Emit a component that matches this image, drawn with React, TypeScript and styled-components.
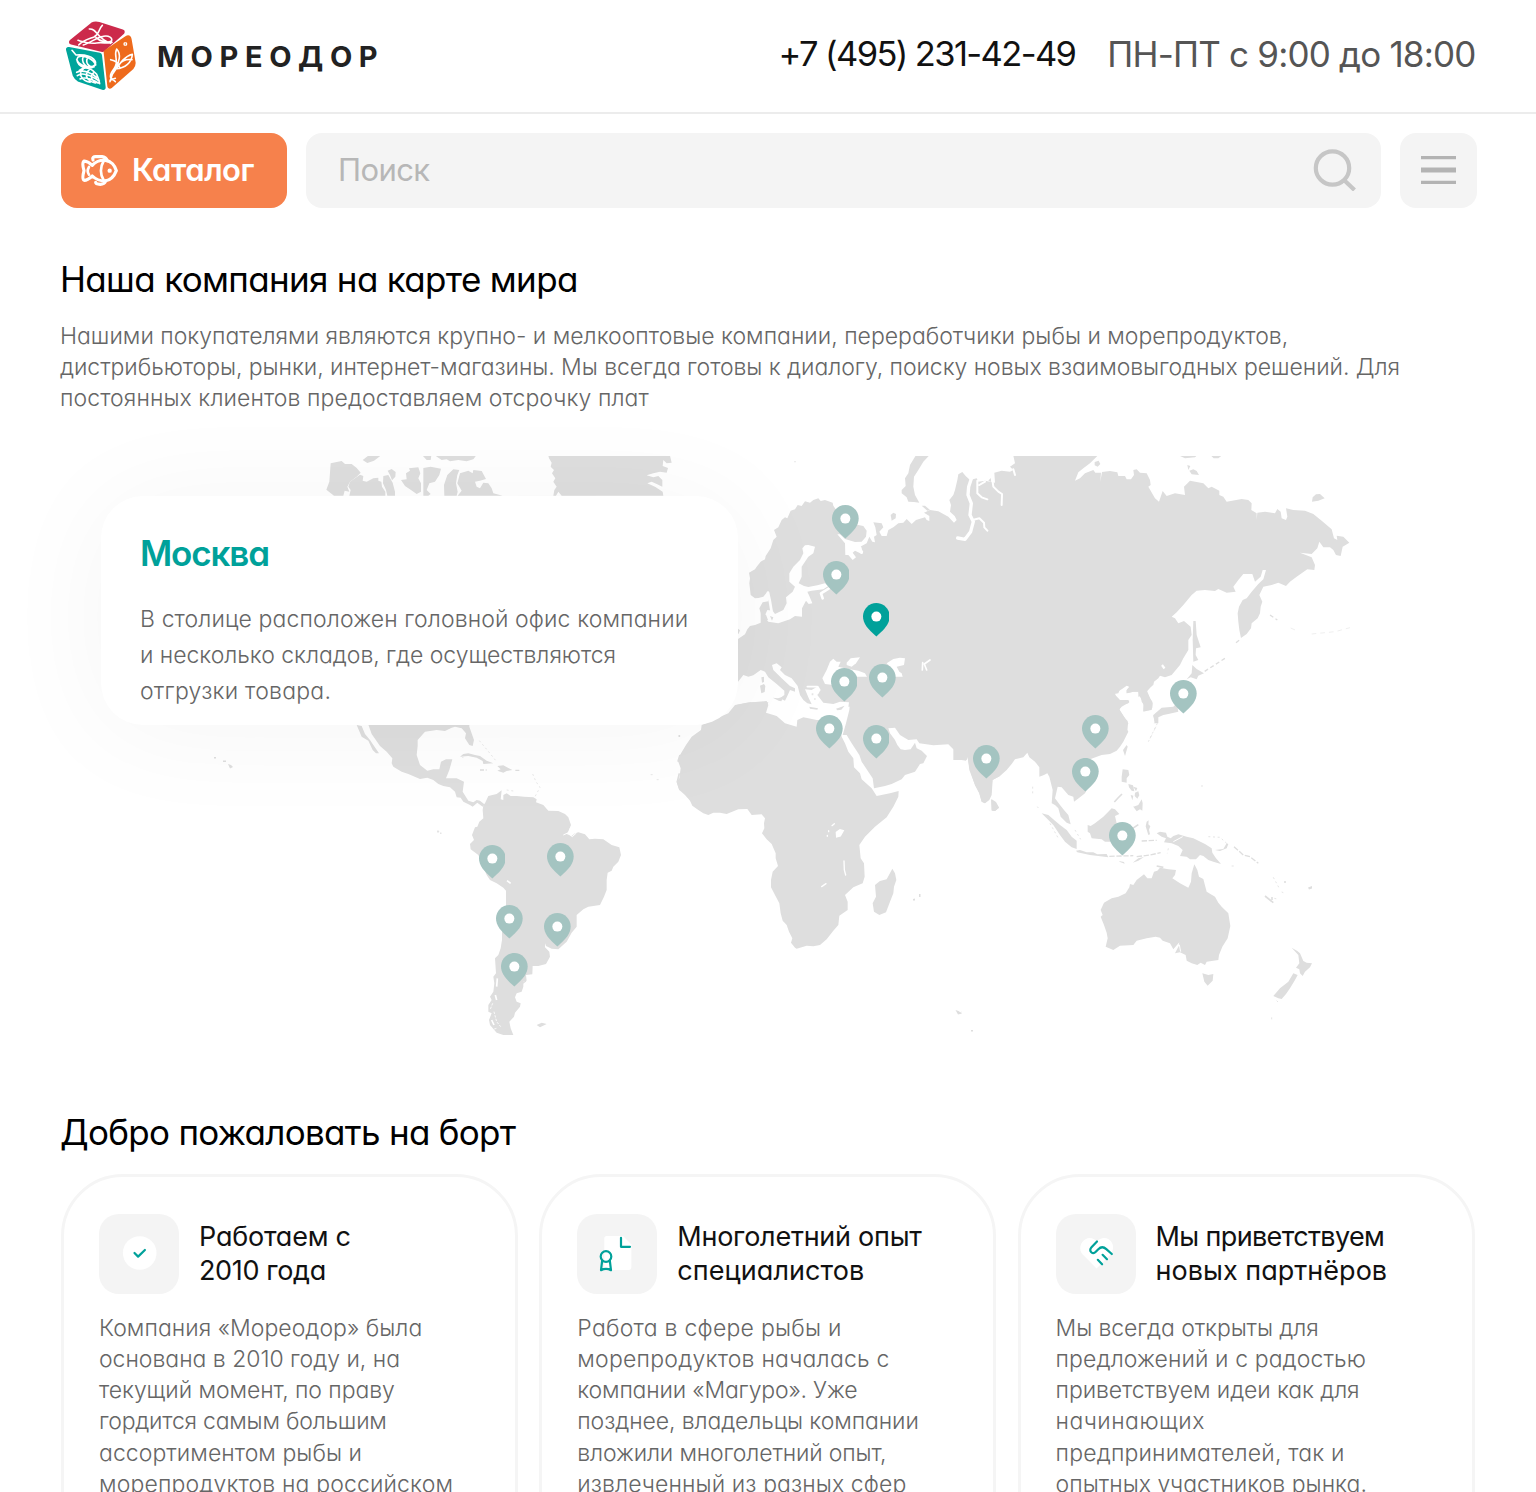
import React from "react";
import styled, { createGlobalStyle } from "styled-components";

const GlobalStyle = createGlobalStyle`
  * { box-sizing: border-box; }
  body {
    margin: 0;
    background: #fff;
    font-family: Inter, "Open Sans", sans-serif;
    font-feature-settings: "cv11";
  }
  h1, h2, h3, p { margin: 0; font-weight: 400; }
  svg { display: block; }
`;

const Page = styled.div`
  width: 1536px;
  height: 1492px;
  overflow: hidden;
  background: #fff;
  color: #111;
`;

/* One typeset line; $track tunes the letter spacing in px. */
const Line = styled.span<{ $track?: number }>`
  display: block;
  white-space: nowrap;
  letter-spacing: ${(p) => p.$track ?? 0}px;
`;

type Row = [text: string, track: number];
const Lines = ({ rows }: { rows: Row[] }) => (
  <>
    {rows.map(([text, track]) => (
      <Line key={text} $track={track}>
        {text}
      </Line>
    ))}
  </>
);

/* ---------- header ---------- */

const Header = styled.header`
  display: flex;
  align-items: center;
  justify-content: space-between;
  height: 114px;
  padding: 0 60.500px 0 65px;
  border-bottom: 2px solid #ececec;
`;

const Brand = styled.div`
  display: flex;
  align-items: center;
  gap: 20px;
`;

const BrandName = styled.span`
  padding-top: 2px;
  font-size: 29px;
  line-height: 36px;
  font-weight: 700;
  letter-spacing: 6.6px;
  color: #222;
`;

const Contacts = styled.div`
  display: flex;
  gap: 32px;
  padding-bottom: 5px;
  font-size: 35px;
  line-height: 44px;
`;

const Phone = styled.span`
  font-size: 34.5px;
  letter-spacing: -1.62px;
  white-space: nowrap;
`;

const Hours = styled.span`
  letter-spacing: -0.81px;
  white-space: nowrap;
  color: #555;
`;

/* ---------- tool bar ---------- */

const Bar = styled.div`
  display: flex;
  gap: 19.5px;
  padding: 19px 59px 0 61px;
`;

const CatalogButton = styled.button`
  display: flex;
  align-items: center;
  gap: 13px;
  width: 225.5px;
  height: 75px;
  padding: 0 0 1px 19px;
  border: 0;
  border-radius: 16px;
  background: #f6814c;
  color: #fff;
  font: 600 31px/38px Inter, sans-serif;
  font-feature-settings: "cv11";
  letter-spacing: -0.45px;
`;

const Search = styled.div`
  display: flex;
  flex: 1;
  align-items: center;
  justify-content: space-between;
  height: 75px;
  padding: 0 24px 2px 32px;
  border-radius: 16px;
  background: #f4f4f4;
  color: #b7b7b7;
  font-size: 31px;
  line-height: 38px;
  letter-spacing: -0.6px;
`;

const MenuButton = styled.button`
  display: flex;
  align-items: center;
  justify-content: center;
  width: 77px;
  height: 75px;
  padding: 0 0 1px;
  border: 0;
  border-radius: 16px;
  background: #f4f4f4;
`;

/* ---------- intro ---------- */

const Section = styled.section<{ $top: number }>`
  padding: ${(p) => p.$top}px 60px 0;
`;

const Title = styled.h2`
  color: #000;
  font-size: 35px;
  line-height: 44px;
`;

const Intro = styled.p`
  padding-top: 20px;
  color: #666;
  font-size: 23px;
  font-weight: 300;
  line-height: 31.2px;
`;

/* ---------- map ---------- */

const MapArea = styled.div`
  position: relative;
  height: 579px;
  margin-top: 41.4px;
`;

const Popup = styled.article`
  position: absolute;
  left: 101px;
  top: 40px;
  width: 637px;
  height: 229px;
  padding: 35px 39px;
  border-radius: 42px;
  background: #fff;
  box-shadow: 0 6px 116px rgba(0, 0, 0, 0.045);
`;

const City = styled.h3`
  color: #00a19a;
  font-size: 35px;
  font-weight: 600;
  line-height: 44px;
`;

const CityText = styled.p`
  padding-top: 26px;
  color: #666;
  font-size: 23px;
  font-weight: 300;
  line-height: 36px;
`;

const PinSvg = styled.svg<{ $x: number; $y: number }>`
  position: absolute;
  left: ${(p) => p.$x - 13.3}px;
  top: ${(p) => p.$y - 469.4}px;
`;

const pins: [number, number][] = [
  [845.5, 518.7], [836, 574.7], [844, 681.7], [882.3, 677], [829.6, 728.3],
  [876, 738], [986.4, 758.5], [1095.3, 728], [1183.3, 693], [1085.5, 771.5],
  [1122.4, 835.3], [492, 858], [560.7, 856], [509.5, 918.7], [557.5, 926.7],
  [514.4, 966.7],
];

const Pin = ({ x, y, active }: { x: number; y: number; active?: boolean }) => (
  <PinSvg $x={x} $y={y} width="26.7" height="34" viewBox="0 0 26.7 34">
    <path
      fill={active ? "#00a19a" : "#a4c4c1"}
      d="M13.35 0C20.7 0 26.7 6 26.7 13.3c0 7.2-4.9 13.2-13.35 20.2C4.9 26.5 0 20.5 0 13.3 0 6 6 0 13.35 0Z"
    />
    <circle cx="13.35" cy="13.6" r="5" fill="#fff" />
  </PinSvg>
);

const northAmerica = [
  "M62,70L95,63 105,72 125,72 140,84 152,98 140,110 120,125 112,140 118,155 104,152 100,167H72L49,149 58,125Z",
  "M118,167L122,150 115,140 120,125 150,104 160,108 158,122 170,125 190,115 205,113 205,122 214,125 216,140 226,155V167Z",
  "M220,108L235,105 248,128 255,155V167H232L228,150 219,130Z",
  "M233,92L245,87 257,96 256,110 246,121 240,105Z",
  "M158,60L175,47H212L192,62 172,69Z",
  "M288,100L300,92 297,85 325,82 331,100 325,115 333,130 333,155 320,162 303,150 285,138 273,120 290,118Z",
  "M340,84L362,80 393,86 388,105 375,125 358,130 350,150 362,162 355,167H340Z",
  "M338,47H364L362,60 350,60ZM376,47H498L490,58 470,64 445,60 420,64 410,58 395,60Z",
  "M403,167L402,135 412,105 430,88 448,90 442,105 438,130 443,155 440,167Z",
  "M443,167L455,152 442,130 450,100 475,92 488,100 490,90 515,93 528,117 510,122 495,125 500,140 510,145 520,128 535,130 545,145 550,160 578,167Z",
  "M715,47H1080L1085,68 1070,70 1060,60 1058,78 1074,84 1070,98 1050,95 1030,100 1010,106 1030,112 1045,108 1057,120V140L1040,132 1025,125 1012,130 1035,140 1058,155 1060,167H755L745,155 738,167H730L733,150 740,140 730,125 736,115 726,100 732,90 722,80 725,68 717,55Z",
];

const europe = [
  "M557,47H597L580,65 565,90 552,110 550,140 555,165 568,188 552,186 535,185 530,172 515,160 515,150 527,138 525,115 535,100 540,75Z",
  "M-30,600L24,597 45,583 52,568 60,558 75,555 92,548 92,520 88,505 98,487 115,484 118,470 112,455 100,470 85,474 75,475 62,465 58,430 60,415 57,398 75,388 80,380 92,365 105,358 107,348 122,325 130,300 140,290 132,270 145,262 155,240 165,232 172,235 182,212 195,208 203,195 215,198 225,184 240,188 250,180 265,175 272,183 285,180 308,188 310,197 322,215 345,240 385,255 400,258 410,272 408,290 395,305 375,306 345,297 330,283 322,283 345,310 346,345 355,345 368,360 378,352 368,338 375,332 395,342 400,335 388,322 410,310 418,290 427,305 435,307 432,290 440,285 436,262 430,247 455,250 460,262 448,275 455,288 470,288 475,270 490,262 505,250 520,248 530,237 545,252 558,240 585,232 590,240 598,243V228L582,218 600,210 625,214 640,222 655,230 672,248 680,240 674,228 660,215 663,195 658,180 670,165 675,150 682,120 685,103 697,96 707,108 720,120 740,115 745,125 765,122 795,128 793,98 815,92 840,95 850,90 840,80 855,70 850,47H980V800H-30Z",
  "M482,225L490,218 498,222 497,235 485,242ZM575,197L585,197 600,210 592,212ZM775,122l7,-8 2,12Z",
];
const europeSeas = [
  "M235,315L255,320 250,340 235,350 225,365 215,380V410L206,430 222,438 235,441 262,436 285,430 295,438 280,448 245,452 232,455 238,468 247,490 236,492 228,482 216,505V530L195,528 180,538 145,550 115,545 103,530 112,510 128,512 135,522 160,510 170,490 168,472 188,455 195,440 178,425V400L190,380 210,360 220,340 217,325 225,316Z",
  "M10,740L22,728 40,705 55,710 70,706 92,690 105,695 115,712 140,732 163,752V765L150,775 165,782 172,768 180,750 195,755 195,745 180,738 155,715 130,690 126,675 140,670 155,682 150,690 165,705 185,715 203,738 210,765 220,780 232,790 245,793 235,772 225,748 245,750 265,738 272,750 262,765 280,788 310,792 330,785 357,787 352,825 343,850 325,855 310,845 265,853 235,843 208,833 200,858 185,855 165,850 140,826 120,822 107,815 115,787 60,787 20,795 -5,815 -30,815V735Z",
  "M285,732L277,715 290,690 300,665 310,656 320,665 332,665 325,680 345,685 360,688 385,692 405,700 415,718 405,735 385,735 360,722 330,725 310,735Z",
  "M350,668L362,655 390,652 378,670 365,680 350,675Z",
  "M470,670L490,657 510,653 525,655 522,675 500,680 508,695 515,700 520,718 540,735 528,745 533,765V785L510,788 488,775 485,765 495,745 478,710 490,690Z",
];

const farEast = [
  "M-20,47H203L180,70 160,85 145,97 135,122 150,115 165,100 190,90 196,98 213,98 211,125 216,96 240,93 262,97 265,108 285,108 290,118 303,118 312,105 310,90 320,88 330,98 350,100 360,120 362,135 355,140 375,175 387,185 398,153 410,168 435,160 465,165 462,140 480,122 520,130 535,145 545,140 568,152 568,165 580,170 590,185 635,177 655,180 665,190 664,210 680,220V240L682,218 705,215 735,220 742,207 752,215 755,235 768,240 772,230 768,205 790,210 825,212 850,222 875,242 905,268 912,295 922,300 920,287 940,290 958,308 938,320 932,348 918,345 910,330 900,322 880,322 868,305 862,325 845,342 810,338 845,352 855,375 853,390 832,388 800,410 780,425 768,438 745,428 725,435 700,440 688,465 697,485 692,500 690,520 683,535 665,550 663,565 650,582 633,594 628,570 625,545 623,520 627,500 638,480 650,475 665,455 685,432 700,418 708,390 698,390 692,410 675,425 667,402 640,402 625,420 610,440 617,455 590,458 565,447 555,453 525,450 500,452 485,465 460,495 440,517 425,530 435,535 445,550 462,543 482,560 485,585 475,600 475,630 460,655 450,675 425,705 405,712 390,707 385,715 372,725 370,735 350,750 360,775 367,785V803L360,810 340,815 342,795 335,785 333,768 325,770 325,755 310,755 290,760 290,750 299,740 290,737 275,748 255,760 257,768 268,780 295,780 298,787 275,800 268,808 285,835 293,843V865L287,885 275,900H-20Z",
  "M490,543H497L500,585 512,622 498,625 497,645 505,660 490,665 488,600Z",
  "M487,675L500,687 522,700 505,707 500,718 482,712 470,718 485,700Z",
  "M370,825L395,803 430,800 440,790 445,815 415,822 400,825 385,832 385,850 375,850Z",
  "M478,92L490,88 500,93 507,105 485,103ZM846,185L848,172 858,163 870,162 884,175 865,182ZM448,47h52l-5,5-30,3zM543,47h32l-10,8h-14zM472,75l9,3-6,12zM194,66l12-4 5,10-8,8-9-4z",
];

const africa = [
  "M125,135L123,150 95,170 78,195 60,225 53,240 62,265 58,295 50,305 58,330 75,345 90,362 97,377 115,390 130,400 145,405 160,398 180,398 200,402 235,388 262,387 268,395 275,405 305,403 315,415 312,430 313,445 306,460 320,478 335,492 347,520 347,535 354,558 338,575 333,600V622L345,645 358,670 362,700 368,722 380,735 387,755 397,775 393,788 405,803 410,806 440,797 460,799 480,795 500,778 520,752 535,735 538,707 563,690V665L555,645 580,622 608,610 614,590 612,550 602,535 598,495 615,470 645,440 680,412 700,380 715,350 716,333 690,340 650,348 635,325 605,298 600,280 582,262 580,235 565,215 555,190 545,170 540,120H470L445,115 430,112 412,120 410,140 375,130 350,108 318,98 325,75 320,63 260,68 225,75 205,100Z",
  "M548,165L560,165 575,190 598,225 605,245 625,275 638,295 642,325 675,318 695,312 725,298 735,285 765,275 780,252 790,250 801,228 785,212 770,205 765,188 752,208 735,210 722,208 712,195 705,180 690,160 685,145 705,143 720,165 745,180 770,178 778,190 820,196 865,193 880,208 892,215 890,225 905,240 918,242 922,230 930,270 945,315 958,340 965,365 975,370 993,345 997,300 1020,288V-10H560L570,68 568,90 558,130Z",
  "M697,566L705,580 709,600 702,620 700,640 690,665 678,697 658,705 642,695 638,670 648,650 645,615 660,603 680,598Z",
  "M993,358L1008,368 1017,383 1005,393 995,392Z",
];

const asia = [
  "M-20,-10V240L20,240 23,230 28,270 45,315 58,340 65,365 75,370 88,360 95,345 98,300 120,288 140,270 155,252 165,238 190,232 202,218 208,232 225,245 238,262 238,290 252,285 262,280 268,290 278,330 275,370 285,375 295,385 302,410 320,428 332,433 325,405 312,390 300,375 285,355 293,320 305,322 325,345 340,350 342,365 360,352 375,340 390,310 375,275 368,250 390,238 425,225 450,222 470,212 480,200 490,185 500,165 505,155 500,145 505,130 492,110 478,90 485,75 505,70 508,62 480,60 463,42 475,40 480,28 500,15 508,20 500,30V40L520,35H535L540,50 550,70V93L575,90 578,70 560,35 575,18 583,0V-10Z",
  "M245,400L265,405 285,422 300,435 320,450 335,470 350,482V507L335,502 315,485 300,465 280,435 260,415Z",
  "M348,512L360,510 380,517 400,517 412,523 440,522 445,532 415,528 390,525 352,517Z",
  "M383,435L392,438 405,430 430,410 442,398 455,385 465,388 478,402 465,408 470,430 480,440 460,485 435,485 425,478 395,475 390,460 383,455Z",
  "M590,460L600,455 618,458 622,470 632,475 640,468 655,463 680,470 700,475 735,492 755,505 757,518 768,535 783,552 760,545 745,540 730,528 720,525 708,538H690L680,530 660,528 668,510 655,498 635,490 612,487 618,475 605,470Z",
  "M765,510L790,507 800,490 805,492 800,505 780,513Z",
  "M488,268L505,270 508,285 500,295V308L485,305V290Z",
  "M508,385L535,375 545,358 548,370 547,392 540,388 530,394 520,380Z",
  "M500,195L503,200 495,228 489,210Z",
  "M95,358L108,366 117,383 105,393 95,390Z",
  "M422,690L432,668 455,655 475,650 497,640 508,622 510,612 520,615 530,600 552,583 562,595 575,595 582,575 592,572 600,563 625,568 648,570 645,585 637,595 660,610 685,623 693,605 695,580 703,553 712,570 717,590 730,597 740,635 765,650 775,668 785,680 805,700 811,738 803,775 787,800 777,825 775,840 740,845 735,855 722,848 712,855 695,850 680,842 677,825 660,817 645,820 655,800 658,787 640,808 630,790 608,782 600,773 587,770 560,775 530,782 520,795 480,797 460,810 437,800 443,775 440,758 432,735 422,710 428,705Z",
  "M727,880L745,885 760,882 758,902 743,917 733,905Z",
  "M995,803L1012,813 1020,820 1030,843 1040,848 1056,850 1050,862 1035,875 1028,888 1020,880 1018,868 1008,863 1018,850 1015,825Z",
  "M1000,880L1013,885 1005,900 990,925 978,942 965,957 955,955 940,948 960,925 985,905Z",
  "M518,548L535,535 552,531 535,542ZM477,543l15,3 2,5-14-5Z",
  "M505,312l14,4 4,18-8-2-8-10ZM520,320l12,4-4,10ZM525,338l10-4 3,12-6,10-8-8ZM512,345l8,2-3,14Z",
  "M560,425l6-4-1,12 6,6-4,10 3,14-5,2-8-26Z",
];

const southAmerica = [
  "M80,30H388V50L402,90 398,108 388,105 375,85 378,70 365,55 345,50 335,53 315,63 290,60 255,65 233,90V108L230,135 240,165 262,182 280,178 298,178 303,155 318,148 337,148 328,180 318,205 350,205 372,215 368,245 385,272 400,277 410,270 420,272 433,283 428,290 412,278 398,290 390,285 370,275 362,263 350,262 345,245 330,232 310,228 295,222 280,210 262,203 240,207 205,192 185,185 160,170 155,160 157,145 140,125 120,108 95,72Z",
  "M50,45L65,48 75,72 90,90 98,102 117,130 108,130 98,120 85,92 65,80Z",
  "M360,140L370,132 385,130 405,135 420,138 440,152 460,160 430,162 428,153 410,143 385,138Z",
  "M472,168L490,166 505,174 517,180 500,183 490,188 472,182 482,178Z",
  "M430,285L435,280 445,258 470,252 485,241 482,268 490,270 490,255 500,250 512,258 530,258 552,260 580,262 590,268 588,277 610,285 625,302 655,303 675,312 685,322 693,345 685,365 680,372 695,378 705,370 715,367 735,373 748,388 765,386 790,388 815,405 838,412 843,435 835,455 820,470 815,482 803,488 800,510 800,540 792,560 780,585 745,590 730,598 710,615V650L695,668 680,695 655,718 635,716 618,708 615,700 615,712 628,725 630,740 618,762 595,768 578,768 577,793 558,795 560,812 550,815 550,830 545,845 530,850 525,862 530,875 542,880 540,890 525,908 522,920 508,935 512,955 520,975H490L470,968 450,945 447,930 455,910 445,905V885L455,870 450,860 460,845 463,820 460,800 468,790 465,745 475,735 482,715 486,690V640L498,590V542L490,533 470,520 450,510 440,495 425,460 415,435 392,418 390,402 402,390 396,375 405,352 412,350 418,335 430,325 428,300Z",
  "M590,945L605,938 620,942 600,952Z",
];

const Land = ({ x, y, shapes, white }: { x: number; y: number; shapes: string[]; white?: boolean }) => (
  <g transform={`translate(${x} ${y}) scale(.33333)`} fill={white ? "#fff" : "#dedede"}>
    {shapes.map((d) => (
      <path key={d} d={d} />
    ))}
  </g>
);

const WorldMap = () => (
  <svg width="1536" height="579" viewBox="0 456 1536 579">
    <Land x={310} y={440} shapes={northAmerica} />
    <Land x={730} y={440} shapes={europe} />
    <g transform="translate(730 440) scale(.33333)" fill="none" stroke="#fff" strokeLinecap="round" strokeLinejoin="round">
      <path strokeWidth="10" d="M724,116L716,140 714,165 724,190 720,225 730,245 722,275 705,298 683,294" />
      <path strokeWidth="6" d="M728,240L748,235 762,248 763,262 772,272M742,122V160L755,172 772,178M748,135L765,125M785,105L790,140 805,155 816,162 815,195M850,88L855,105" />
      <path strokeWidth="8" d="M114,458L119,480 125,515M296,446L273,460 278,475M395,338L390,322" />
      <path strokeWidth="5" d="M578,668L577,690M600,660L583,672 590,690M565,718l2,4M232,740L262,740M240,756L265,758" />
    </g>
    <Land x={730} y={440} shapes={europeSeas} white />
    <g transform="translate(730 440) scale(.33333)" fill="#dedede">
      <path d="M94,712l8-2v16l-6,2zM90,737l12-5 4,6-2,18-10,4zM128,773l16,2 16-5-6,14-8-2zM238,800l26,5-2,4-22-3zM318,806l26-9-10,12-12,2zM22,565l8,6-4,10h-8zM92,520l16,4 6,16-10,2zM120,528l10,4-4,10z" />
      <path d="M245,760h5v6h-5zM252,775h5v4h-5zM193,63h4v4h-4z" opacity=".8" />
    </g>
    <Land x={1030} y={440} shapes={farEast} />
    <path d="M1162 665l2.500 3.500" stroke="#fff" strokeWidth="2.200" />
    <Land x={660} y={680} shapes={africa} />
    <g transform="translate(660 680) scale(.33333)" fill="#fff" stroke="#fff" strokeWidth="4" strokeLinecap="round">
      <path d="M529,457L540,449 550,452 541,468 530,471Z" />
      <path fill="none" d="M552,543L553,570 557,585M485,620L498,611M516,437L523,431M506,452v3M502,466v3" />
    </g>
    <Land x={960} y={680} shapes={asia} />
    <g transform="translate(960 680) scale(.33333)" fill="none" stroke="#dedede">
      <path strokeWidth="5" d="M915,648L940,668M463,366L474,354 486,342M590,558L610,562M518,445L535,434" />
      <path strokeWidth="4" strokeDasharray="16 5" d="M448,529L520,527M545,483L590,481M530,530L570,525 602,518M822,500L850,525 870,530 895,550" />
      <path strokeWidth="3" strokeDasharray="6 8" opacity=".8" d="M270,430L295,475M345,450L362,478M745,470L780,472 800,490M940,592L958,625M625,505L622,520M592,130L565,185M218,320L218,345M232,380l3,4M943,655l8,2M965,636l5,2M950,962l4,4M935,1012v8M0,1000l5-4M815,558h6M588,100L583,130M726,315v6" />
      <path strokeWidth="7" d="M583,105L588,128" />
    </g>
    <g transform="translate(960 680) scale(.33333)" fill="none" stroke="#fff" strokeWidth="3">
      <path d="M640,810L658,795 662,815M668,470L640,485" />
    </g>
    <g transform="translate(1030 440) scale(.33333)" fill="none" stroke="#dedede" strokeWidth="4">
      <path strokeDasharray="12 8" d="M524,694L585,655M618,608L632,597M720,525L742,540" />
      <path strokeWidth="2.500" strokeDasharray="14 12" opacity=".6" d="M782,564L800,572M845,582L915,575 960,563M378,860L358,900" />
    </g>
    <Land x={340} y={710} shapes={southAmerica} />
    <g transform="translate(340 710) scale(.33333)" fill="none" stroke="#dedede" strokeWidth="4">
      <path strokeDasharray="12 5" d="M420,180H440M526,181H542M548,820L562,810" />
      <path strokeWidth="3" strokeDasharray="6 8" opacity=".7" d="M418,92L440,118 470,155M578,192L588,215 600,232 585,260M500,240L520,243M292,362L305,366M932,194h6M950,209h6M366,140l6,6M450,900L465,930" />
      <path strokeWidth="5" d="M1018,75v6M1020,135L1014,155M1018,190L1012,215 1020,240" />
      <path stroke="#fff" strokeWidth="5" d="M501,512L512,520M472,805L470,830M466,855L470,870M455,930L462,945" />
      <path stroke="#fff" strokeWidth="3" d="M670,375L685,368 693,350M686,372L697,380 708,370 707,360 690,360" />
      <path stroke="#fff" strokeWidth="2.500" strokeDasharray="7 4" d="M458,880L450,900M462,905L470,935 482,950M452,960L470,955" />
    </g>
    <g fill="#dedede">
      <path d="M228 764l3 1 2 2-3 1.500zM223 760.500h3v1.500h-3zM214 757h2v1.500h-2zM913 899l2-.5v2h-2zM919 894h1.500v3h-1.500zM1308 887.500l4-1.500v2.500l-3 1zM1339 875l3-.5M955.500 1010l3 1 3.500 2.500-4 1zM971 1030h2v1.500h-2z" />
      <path d="M437 831h2v1.500h-2zM440 832.500h1.500v1.500h-1.500zM1284 881h2v2h-2zM1271 897h2v3h-2z" opacity=".8" />
    </g>
  </svg>
);

/* ---------- feature cards ---------- */

const Cards = styled.div`
  display: grid;
  grid-template-columns: repeat(3, 457px);
  gap: 21.3px;
  padding: 20px 0 0 1px;
`;

const Card = styled.article`
  height: 460px;
  padding: 37px 35px;
  border: 3px solid #f5f5f5;
  border-radius: 62px;
`;

const CardHead = styled.div`
  display: flex;
  align-items: center;
  gap: 20px;
`;

const IconTile = styled.div`
  display: flex;
  flex: none;
  align-items: center;
  justify-content: center;
  width: 80px;
  height: 80px;
  border-radius: 20px;
  background: #f4f4f4;
`;

const CardTitle = styled.h3`
  font-size: 27px;
  line-height: 34px;
`;

const CardText = styled.p`
  padding-top: 18.7px;
  color: #666;
  font-size: 23px;
  font-weight: 300;
  line-height: 31.2px;
`;

const CheckIcon = () => (
  <svg width="40" height="40" viewBox="0 0 40 40" fill="none">
    <circle cx="20.700" cy="19" r="16.800" fill="#fff" />
    <path d="M15.500 19l3.600 3.600 6.800-6.600" stroke="#00a19a" strokeWidth="2.200" strokeLinecap="round" strokeLinejoin="round" />
  </svg>
);

const CertificateIcon = () => (
  <svg width="40" height="40" viewBox="0 0 40 40" fill="none">
    <path d="M7.300 4.500Q7.300 2 9.800 2H26l8.400 8.400V33q0 3-3 3H7.300Z" fill="#fff" />
    <g stroke="#00a19a" strokeWidth="2.200" strokeLinecap="round" strokeLinejoin="round">
      <path d="M24 3.800v9h9" />
      <circle cx="9" cy="22.500" r="5.300" />
      <path d="M5.200 26.500L4 36.200q5-2.600 10 0l-1.200-9.700" />
    </g>
  </svg>
);

const PartnersIcon = () => (
  <svg width="40" height="40" viewBox="0 0 40 40" fill="none">
    <path d="M20.500 34.500L6.500 20.300C2.500 16 4 8 9.500 5.200 13.500 3 18 4.200 20.800 7.500 24 4 29 3 33 5.500 38 9 38.500 16 34.500 20.500Z" fill="#fff" />
    <g stroke="#00a19a" strokeWidth="2.200" strokeLinecap="round" strokeLinejoin="round">
      <path d="M21 7.500l-5.500 5.800c-1.700 1.800-1.500 3.700-.2 4.900 1.300 1.200 3.200 1 4.500-.4l2.500-2.600c2.600-2.600 5.500-2.400 8-.1l5.500 4.900" />
      <path d="M26.600 20.800l4.400 4.400M21.800 25.800l4.300 4.500" />
    </g>
  </svg>
);

const features: { icon: React.ReactNode; title: Row[]; text: Row[] }[] = [
  {
    icon: <CheckIcon />,
    title: [["Работаем с", -0.22], ["2010 года", -0.36]],
    text: [
      ["Компания «Мореодор» была", 0.03],
      ["основана в 2010 году и, на", -0.02],
      ["текущий момент, по праву", -0.08],
      ["гордится самым большим", -0.23],
      ["ассортиментом рыбы и", 0.05],
      ["морепродуктов на российском", 0.15],
    ],
  },
  {
    icon: <CertificateIcon />,
    title: [["Многолетний опыт", -0.25], ["специалистов", 0.08]],
    text: [
      ["Работа в сфере рыбы и", 0.26],
      ["морепродуктов началась с", 0.23],
      ["компании «Магуро». Уже", -0.18],
      ["позднее, владельцы компании", -0.1],
      ["вложили многолетний опыт,", -0.16],
      ["извлеченный из разных сфер", 0.1],
    ],
  },
  {
    icon: <PartnersIcon />,
    title: [["Мы приветствуем", -0.64], ["новых партнёров", 0.02]],
    text: [
      ["Мы всегда открыты для", -0.1],
      ["предложений и с радостью", 0.1],
      ["приветствуем идеи как для", -0.11],
      ["начинающих", 0.45],
      ["предпринимателей, так и", 0.17],
      ["опытных участников рынка.", 0.01],
    ],
  },
];

/* ---------- drawings ---------- */

const Logo = () => (
  <svg width="72" height="70" viewBox="45 34 216 210" fill="none">
    <g strokeWidth="16" strokeLinejoin="round">
      <path fill="#cc2a4b" stroke="#cc2a4b" d="M65,97L128,46Q136,42 146,45L216,67 158,119Z" />
      <path fill="#00a59b" stroke="#00a59b" d="M56,120L148,137 159,233 88,209Q80,205 76,196Z" />
      <path fill="#ee6a1c" stroke="#ee6a1c" d="M169,128L233,85Q236,84 237,90L249,160Q249,167 244,173L180,229Z" />
    </g>
    <g stroke="#fff" strokeWidth="4.800" strokeLinecap="round" strokeLinejoin="round">
      <path d="M118,58C142,56 138,86 182,101M157,47C146,56 150,72 132,82 116,88 98,92 86,106M84,92C104,98 120,104 140,100 158,96 172,104 186,98M100,106C122,100 140,82 160,80 176,76 190,86 184,94 174,100 150,96 138,84" />
      <path d="M66,122L78,136C104,134 134,140 137,160 134,186 90,176 82,156 78,146 84,138 98,138M84,142C104,134 132,150 137,166M80,150C90,172 126,178 137,164M100,140C92,156 108,176 124,174M114,142C104,158 116,174 132,172M88,182C110,166 130,182 140,194 146,206 148,216 149,222M80,188C100,178 126,190 140,204M82,198C96,186 124,198 148,214M90,208C106,200 130,210 149,222M100,178C82,192 96,214 120,218M118,180C100,196 112,214 136,220M132,188C118,200 124,214 144,220" />
      <path d="M200,118C190,138 206,152 196,170 188,186 178,190 182,204L196,216M200,118C214,132 208,160 196,176 188,190 184,200 180,216M247,134C222,140 208,164 190,190M247,134C246,158 226,176 196,178M246,150C232,148 218,150 208,164M182,150C194,152 206,160 210,176M180,212L196,206" />
    </g>
    <circle cx="226" cy="103" r="6" fill="#fff" />
    <path d="M226 99v8" stroke="#ee6a1c" strokeWidth="2" />
  </svg>
);

const FishIcon = () => (
  <svg width="39" height="33" viewBox="91 429 117 99" fill="none" stroke="#fff" strokeWidth="9.500" strokeLinecap="round" strokeLinejoin="round">
    <path d="M128,463C138,451 152,447 168,448 184,450 196,464 200,479 194,495 182,508 166,510 150,510 138,505 128,495 120,502 112,508 104,508 98,506 99,494 103,479 98,462 98,453 104,450 113,451 121,456 128,463Z" />
    <path d="M130,447C127,439 132,437 138,437H157C165,438 170,442 173,449M138,514C138,520 144,520 152,520 162,520 166,515 168,510" />
    <path d="M162,450C151,468 151,491 162,508M118,468C113,476 113,484 118,491" strokeWidth="8" />
    <circle cx="180" cy="479" r="6.500" fill="#fff" stroke="none" />
  </svg>
);

const SearchIcon = () => (
  <svg width="44" height="42" viewBox="0 0 44 42" fill="none" stroke="#c6c6c6" strokeWidth="4.200">
    <circle cx="19.500" cy="19" r="16.700" />
    <path d="M31 31l10.500 10" />
  </svg>
);

const MenuIcon = () => (
  <svg width="35" height="28" viewBox="0 0 35 28" fill="#b3b3b3">
    <path d="M0 0h35v3.300H0zM0 11.500h35v5H0zM0 24.700h35V28H0z" />
  </svg>
);

export default function App() {
  return (
    <Page>
      <GlobalStyle />
      <Header>
        <Brand>
          <Logo />
          <BrandName>МОРЕОДОР</BrandName>
        </Brand>
        <Contacts>
          <Phone>+7 (495) 231-42-49</Phone>
          <Hours>ПН-ПТ с 9:00 до 18:00</Hours>
        </Contacts>
      </Header>

      <Bar>
        <CatalogButton>
          <FishIcon />
          Каталог
        </CatalogButton>
        <Search>
          Поиск
          <SearchIcon />
        </Search>
        <MenuButton aria-label="Меню">
          <MenuIcon />
        </MenuButton>
      </Bar>

      <Section $top={49}>
        <Title>
          <Line $track={-0.67}>Наша компания на карте мира</Line>
        </Title>
        <Intro>
          <Lines
            rows={[
              ["Нашими покупателями являются крупно- и мелкооптовые компании, переработчики рыбы и морепродуктов,", 0],
              ["дистрибьюторы, рынки, интернет-магазины. Мы всегда готовы к диалогу, поиску новых взаимовыгодных решений. Для", -0.055],
              ["постоянных клиентов предоставляем отсрочку плат", 0.08],
            ]}
          />
        </Intro>
      </Section>

      <MapArea>
        <WorldMap />
        {pins.map(([x, y]) => (
          <Pin key={`${x}-${y}`} x={x} y={y} />
        ))}
        <Pin x={876} y={616.3} active />
        <Popup>
          <City>
            <Line $track={-1.16}>Москва</Line>
          </City>
          <CityText>
            <Lines
              rows={[
                ["В столице расположен головной офис компании", 0.12],
                ["и несколько складов, где осуществляются", -0.04],
                ["отгрузки товара.", 0.24],
              ]}
            />
          </CityText>
        </Popup>
      </MapArea>

      <Section $top={75}>
        <Title>
          <Line $track={-0.71}>Добро пожаловать на борт</Line>
        </Title>
        <Cards>
          {features.map((f) => (
            <Card key={f.title[0][0]}>
              <CardHead>
                <IconTile>{f.icon}</IconTile>
                <CardTitle>
                  <Lines rows={f.title} />
                </CardTitle>
              </CardHead>
              <CardText>
                <Lines rows={f.text} />
              </CardText>
            </Card>
          ))}
        </Cards>
      </Section>
    </Page>
  );
}
